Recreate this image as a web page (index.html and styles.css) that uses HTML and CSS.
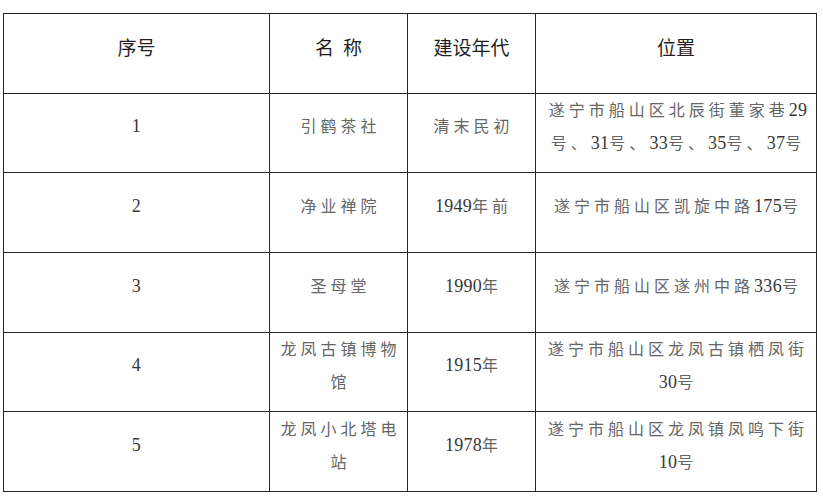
FILE: index.html
```html
<!DOCTYPE html>
<html lang="zh-CN">
<head>
<meta charset="utf-8">
<title>表</title>
<link rel="stylesheet" href="styles.css">
</head>
<body>
<table class="sites">
  <colgroup>
    <col class="c-no">
    <col class="c-name">
    <col class="c-year">
    <col class="c-loc">
  </colgroup>
  <thead>
    <tr class="head">
      <th>序号</th>
      <th>名<span class="gap"></span>称</th>
      <th>建设年代</th>
      <th>位置</th>
    </tr>
  </thead>
  <tbody>
    <tr>
      <td class="idx"><span class="num">1</span></td>
      <td>引鹤茶社</td>
      <td>清末民初</td>
      <td>遂宁市船山区北辰街董家巷<span class="num">29</span><br>号、<span class="num">31</span>号、<span class="num">33</span>号、<span class="num">35</span>号、<span class="num">37</span>号</td>
    </tr>
    <tr>
      <td class="idx"><span class="num">2</span></td>
      <td>净业禅院</td>
      <td><span class="num">1949</span>年前</td>
      <td>遂宁市船山区凯旋中路<span class="num">175</span>号</td>
    </tr>
    <tr>
      <td class="idx"><span class="num">3</span></td>
      <td>圣母堂</td>
      <td><span class="num">1990</span>年</td>
      <td>遂宁市船山区遂州中路<span class="num">336</span>号</td>
    </tr>
    <tr>
      <td class="idx"><span class="num">4</span></td>
      <td>龙凤古镇博物<br>馆</td>
      <td><span class="num">1915</span>年</td>
      <td>遂宁市船山区龙凤古镇栖凤街<br><span class="num">30</span>号</td>
    </tr>
    <tr>
      <td class="idx"><span class="num">5</span></td>
      <td>龙凤小北塔电<br>站</td>
      <td><span class="num">1978</span>年</td>
      <td>遂宁市船山区龙凤镇凤鸣下街<br><span class="num">10</span>号</td>
    </tr>
  </tbody>
</table>
</body>
</html>
```

FILE: styles.css
```css
html, body {
  margin: 0;
  padding: 0;
  background: #ffffff;
}

body {
  padding: 13px 0 0 3px;
}

.sites {
  border-collapse: collapse;
  table-layout: fixed;
  width: 813px;
  font-family: "Liberation Serif", "Noto Sans CJK SC", serif;
}

.c-no { width: 266px; }
.c-name { width: 138px; }
.c-year { width: 128px; }
.c-loc { width: 281px; }

.sites th,
.sites td {
  border: 1px solid #262626;
  text-align: center;
  vertical-align: middle;
  padding: 0 0 12px 0;
  white-space: nowrap;
  overflow: hidden;
}

.sites tr {
  height: 79.67px;
}

.sites th {
  font-family: "Noto Sans CJK SC", "Noto Sans", sans-serif;
  font-weight: 400;
  font-size: 19px;
  line-height: 26px;
  color: #1f1f1f;
}

.gap {
  display: inline-block;
  width: 9px;
}

.sites td {
  font-size: 16px;
  line-height: 33px;
  letter-spacing: 4px;
  color: #666666;
  padding-left: 4px;
}

.sites td.idx {
  padding-left: 0;
}

.num {
  font-family: "Liberation Serif", serif;
  font-size: 18px;
  letter-spacing: 0.3px;
  color: #383838;
}
```
